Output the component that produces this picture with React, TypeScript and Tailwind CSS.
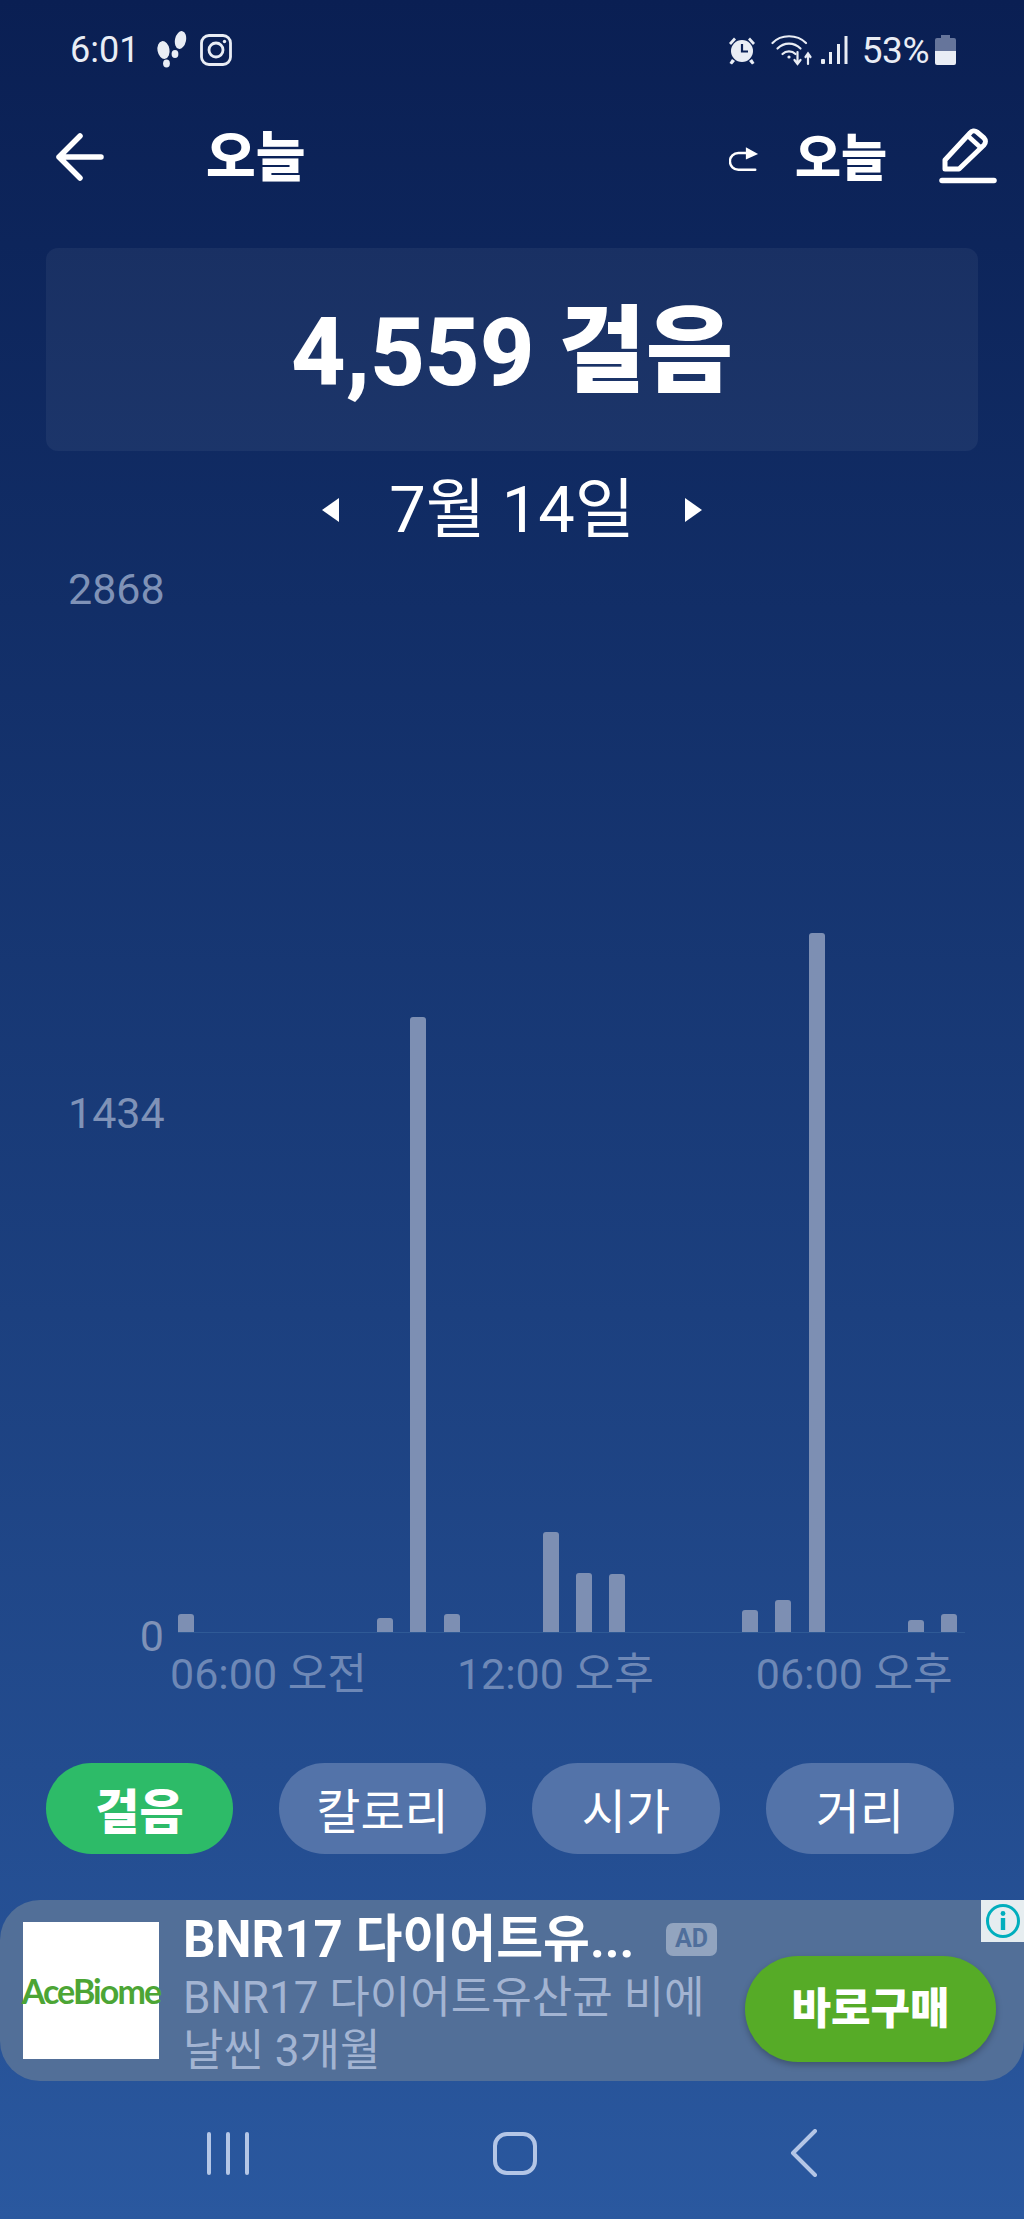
const bars = [18, 0, 0, 0, 0, 0, 14, 615, 18, 0, 0, 100, 59, 58, 0, 0, 0, 22, 32, 699, 0, 0, 12, 18]

const tabs = [
  { label: '걸음', width: 'w-[187px]', active: true },
  { label: '칼로리', width: 'w-[207px]', active: false },
  { label: '시가', width: 'w-[188px]', active: false },
  { label: '거리', width: 'w-[188px]', active: false },
]

const StatusLeftIcons = () => (
  <div className="flex items-center gap-[12px] ml-[17px]">
    <svg width="32" height="38" viewBox="0 0 32 38" fill="#e9edf5">
      <ellipse cx="7.5" cy="19" rx="6" ry="9" transform="rotate(-10 7.5 19)" />
      <ellipse cx="10.5" cy="32.5" rx="3.4" ry="4" />
      <ellipse cx="24.5" cy="9" rx="5.5" ry="9" transform="rotate(12 24.5 9)" />
      <ellipse cx="19" cy="23" rx="3.4" ry="4" />
    </svg>
    <svg width="32" height="32" viewBox="0 0 32 32" fill="none" stroke="#e9edf5" strokeWidth="2.8">
      <rect x="1.5" y="1.5" width="29" height="29" rx="7.5" />
      <circle cx="16" cy="16" r="7" />
      <circle cx="24.5" cy="7.5" r="1.7" fill="#e9edf5" stroke="none" />
    </svg>
  </div>
)

const StatusRightIcons = () => (
  <div className="flex items-center">
    <svg width="30" height="30" viewBox="0 0 30 30" fill="#e9edf5">
      <circle cx="15" cy="16" r="11" />
      <path d="M2 8 L7 2.5 L9 4.5 L4 10 Z M28 8 L23 2.5 L21 4.5 L26 10 Z M5 24 L8 26 L5 29.5 L2.5 28 Z M25 24 L22 26 L25 29.5 L27.5 28 Z" />
      <path d="M15 9 V16.5 H21" fill="none" stroke="#0b2156" strokeWidth="2.2" />
    </svg>
    <svg className="ml-[14px]" width="42" height="34" viewBox="0 0 42 34" fill="none" stroke="#e9edf5" strokeWidth="2.2" strokeLinecap="round">
      <path d="M1.5 10 C10 1 26 1 35 10" />
      <path d="M6.5 15.5 C13 9 23 9 29.5 15.5" />
      <path d="M11.5 21 C15 17.5 21 17.5 24.5 21" />
      <circle cx="18" cy="24" r="1.6" fill="#e9edf5" stroke="none" />
      <path d="M26.5 19 V30 M23.5 27 L26.5 31 L29.5 27" />
      <path d="M37 31 V21 M34.5 24 L37 20.5 L39.5 24" />
    </svg>
    <svg className="ml-[8px]" width="27" height="29" viewBox="0 0 27 29" fill="#e9edf5">
      <rect x="0" y="23" width="4" height="5" rx="1" />
      <rect x="8" y="16" width="3" height="12" />
      <rect x="16" y="8" width="3" height="20" />
      <rect x="23.5" y="0" width="3" height="28" />
    </svg>
    <span className="ml-[14px] text-[37px] leading-none text-[#e9edf5] tracking-[-0.5px]">53%</span>
    <svg className="ml-[6px]" width="21" height="30" viewBox="0 0 21 30">
      <path d="M6 0 H15 V3 H19 A2 2 0 0 1 21 5 V16 H0 V5 A2 2 0 0 1 2 3 H6 Z" fill="#66759b" />
      <path d="M0 16 H21 V28 A2 2 0 0 1 19 30 H2 A2 2 0 0 1 0 28 Z" fill="#e9edf5" />
    </svg>
  </div>
)

const Header = () => (
  <div className="h-[118px] flex items-center pl-[56px] pr-[27px]">
    <svg className="-mt-[4px]" width="48" height="48" viewBox="0 0 48 48" fill="none" stroke="white" strokeWidth="5.5" strokeLinecap="round" strokeLinejoin="round">
      <path d="M3 24 H45 M24 3 L3 24 L24 45" />
    </svg>
    <h1 className="ml-[102px] text-[54px] font-extrabold text-white leading-none">오늘</h1>
    <div className="ml-auto flex items-center">
      <svg width="30" height="25" viewBox="0 0 32 26">
        <path d="M18 6 H10 A8 8 0 0 0 10 24 H28" fill="none" stroke="white" strokeWidth="2.6" strokeLinecap="round" />
        <path d="M18 0 L31 7 L18 13 Z" fill="white" />
      </svg>
      <span className="ml-[36px] text-[50px] font-extrabold text-white leading-none">오늘</span>
      <svg className="ml-[52px] -mt-[6px]" width="58" height="56" viewBox="0 0 58 56" fill="none" stroke="white" strokeLinecap="round" strokeLinejoin="round">
        <path d="M6 32 L31 5 A5 5 0 0 1 38 4 L45 10 A5 5 0 0 1 45 17 L20 41 L6 41 Z" strokeWidth="5" />
        <path d="M29 8 L41 19" strokeWidth="4.5" />
        <path d="M3 52.5 H55" strokeWidth="5.5" />
      </svg>
    </div>
  </div>
)

const Chart = () => (
  <div className="flex">
    <div className="w-[164px] h-[1095px] flex flex-col justify-between items-end text-[43px] leading-[48px] text-[#7f92b7]">
      <span className="self-start ml-[68px]">2868</span>
      <span className="self-start ml-[68px]">1434</span>
      <span>0</span>
    </div>
    <div className="ml-[14px] w-[787px]">
      <div className="h-[1068px] flex items-end gap-x-[17.2px] border-b border-[#2f5a96]">
        {bars.map((h, i) => (
          <div key={i} className="w-[16px] bg-[#7d8fb3] rounded-t-[3px]" style={{ height: h }} />
        ))}
      </div>
      <div className="mt-[17px] -ml-[8px] flex whitespace-nowrap text-[43px] leading-[48px] text-[#6e88b6]">
        <span>06:00 오전</span>
        <span className="ml-[90px]">12:00 오후</span>
        <span className="ml-[102px]">06:00 오후</span>
      </div>
    </div>
  </div>
)

const Tabs = () => (
  <div className="mt-[65px] h-[91px] flex pl-[46px] gap-x-[46px]">
    {tabs.map((tab) => (
      <div
        key={tab.label}
        className={`${tab.width} pt-[9px] rounded-full flex items-center justify-center text-[48px] text-white ${tab.active ? 'bg-[#2dbb68] font-extrabold' : 'bg-[#5373a9]'}`}
      >
        {tab.label}
      </div>
    ))}
  </div>
)

const AdBanner = () => (
  <div className="relative mt-[46px] h-[181px] rounded-[40px] bg-[#526f98] flex items-start pl-[23px] pt-[22px]">
    <div className="w-[136px] h-[137px] bg-white flex items-center justify-center text-[34px] leading-none font-bold text-[#4ca535] tracking-[-1.9px] font-['Lato']">
      AceBiome
    </div>
    <div className="ml-[24px] -mt-[8px] w-[540px] flex flex-col">
      <div className="flex items-center h-[50px]">
        <span className="w-[483px] text-[51px] leading-none font-bold text-white whitespace-nowrap">BNR17 다이어트유...</span>
        <span className="w-[51px] h-[33px] rounded-[7px] bg-[#92a4bf] flex items-center justify-center text-[25px] font-bold text-[#4f6e9b]">AD</span>
      </div>
      <div className="mt-[8px] text-[44px] leading-[53px] text-[#a3b4d2] whitespace-nowrap">
        BNR17 다이어트유산균 비에
        <br />
        날씬 3개월
      </div>
    </div>
    <div className="ml-[22px] mt-[34px] w-[251px] h-[106px] rounded-full bg-[#56ab27] shadow-[0_3px_6px_rgba(0,0,0,0.25)] flex items-center justify-center text-[43px] font-extrabold text-white">
      바로구매
    </div>
    <div className="absolute top-0 right-0 w-[43px] h-[42px] bg-[#e6edf0] flex items-center justify-center">
      <svg width="36" height="36" viewBox="0 0 36 36">
        <circle cx="18" cy="18" r="15.5" fill="none" stroke="#00aebd" strokeWidth="3" />
        <circle cx="18" cy="10.5" r="2.4" fill="#00aebd" />
        <rect x="15.8" y="15" width="4.4" height="12" fill="#00aebd" />
      </svg>
    </div>
  </div>
)

const NavBar = () => (
  <div className="flex-1 flex items-center pl-[207px] pt-[6px]">
    <div className="flex gap-x-[15px]">
      <div className="w-[4px] h-[43px] bg-[#b4c6e6] rounded-full" />
      <div className="w-[4px] h-[43px] bg-[#b4c6e6] rounded-full" />
      <div className="w-[4px] h-[43px] bg-[#b4c6e6] rounded-full" />
    </div>
    <div className="ml-[244px] w-[44px] h-[43px] rounded-[14px] border-[4px] border-[#b4c6e6]" />
    <svg className="ml-[253px]" width="28" height="48" viewBox="0 0 28 48" fill="none" stroke="#b4c6e6" strokeWidth="4" strokeLinecap="round" strokeLinejoin="round">
      <path d="M25 2 L3 24 L25 46" />
    </svg>
  </div>
)

export default function App() {
  return (
    <div className="w-[1024px] h-[2219px] overflow-hidden flex flex-col bg-gradient-to-b from-[#0a1f53] to-[#2a589f] font-['Roboto','Noto_Sans_CJK_KR',sans-serif]">
      <div className="h-[100px] flex items-center justify-between pl-[70px] pr-[68px]">
        <div className="flex items-center">
          <span className="text-[36px] leading-none text-[#e9edf5]">6:01</span>
          <StatusLeftIcons />
        </div>
        <StatusRightIcons />
      </div>
      <Header />
      <div className="mt-[30px] mx-[46px] h-[203px] pt-[5px] rounded-[12px] bg-white/5 flex items-center justify-center text-[95px] font-extrabold text-white leading-none">
        4,559 걸음
      </div>
      <div className="h-[114px] pt-[4px] flex items-center justify-center">
        <div className="w-0 h-0 border-y-[12px] border-y-transparent border-r-[17px] border-r-white" />
        <span className="mx-[50px] text-[65px] leading-none text-white">7월 14일</span>
        <div className="w-0 h-0 border-y-[12px] border-y-transparent border-l-[17px] border-l-white" />
      </div>
      <Chart />
      <Tabs />
      <AdBanner />
      <NavBar />
    </div>
  )
}
